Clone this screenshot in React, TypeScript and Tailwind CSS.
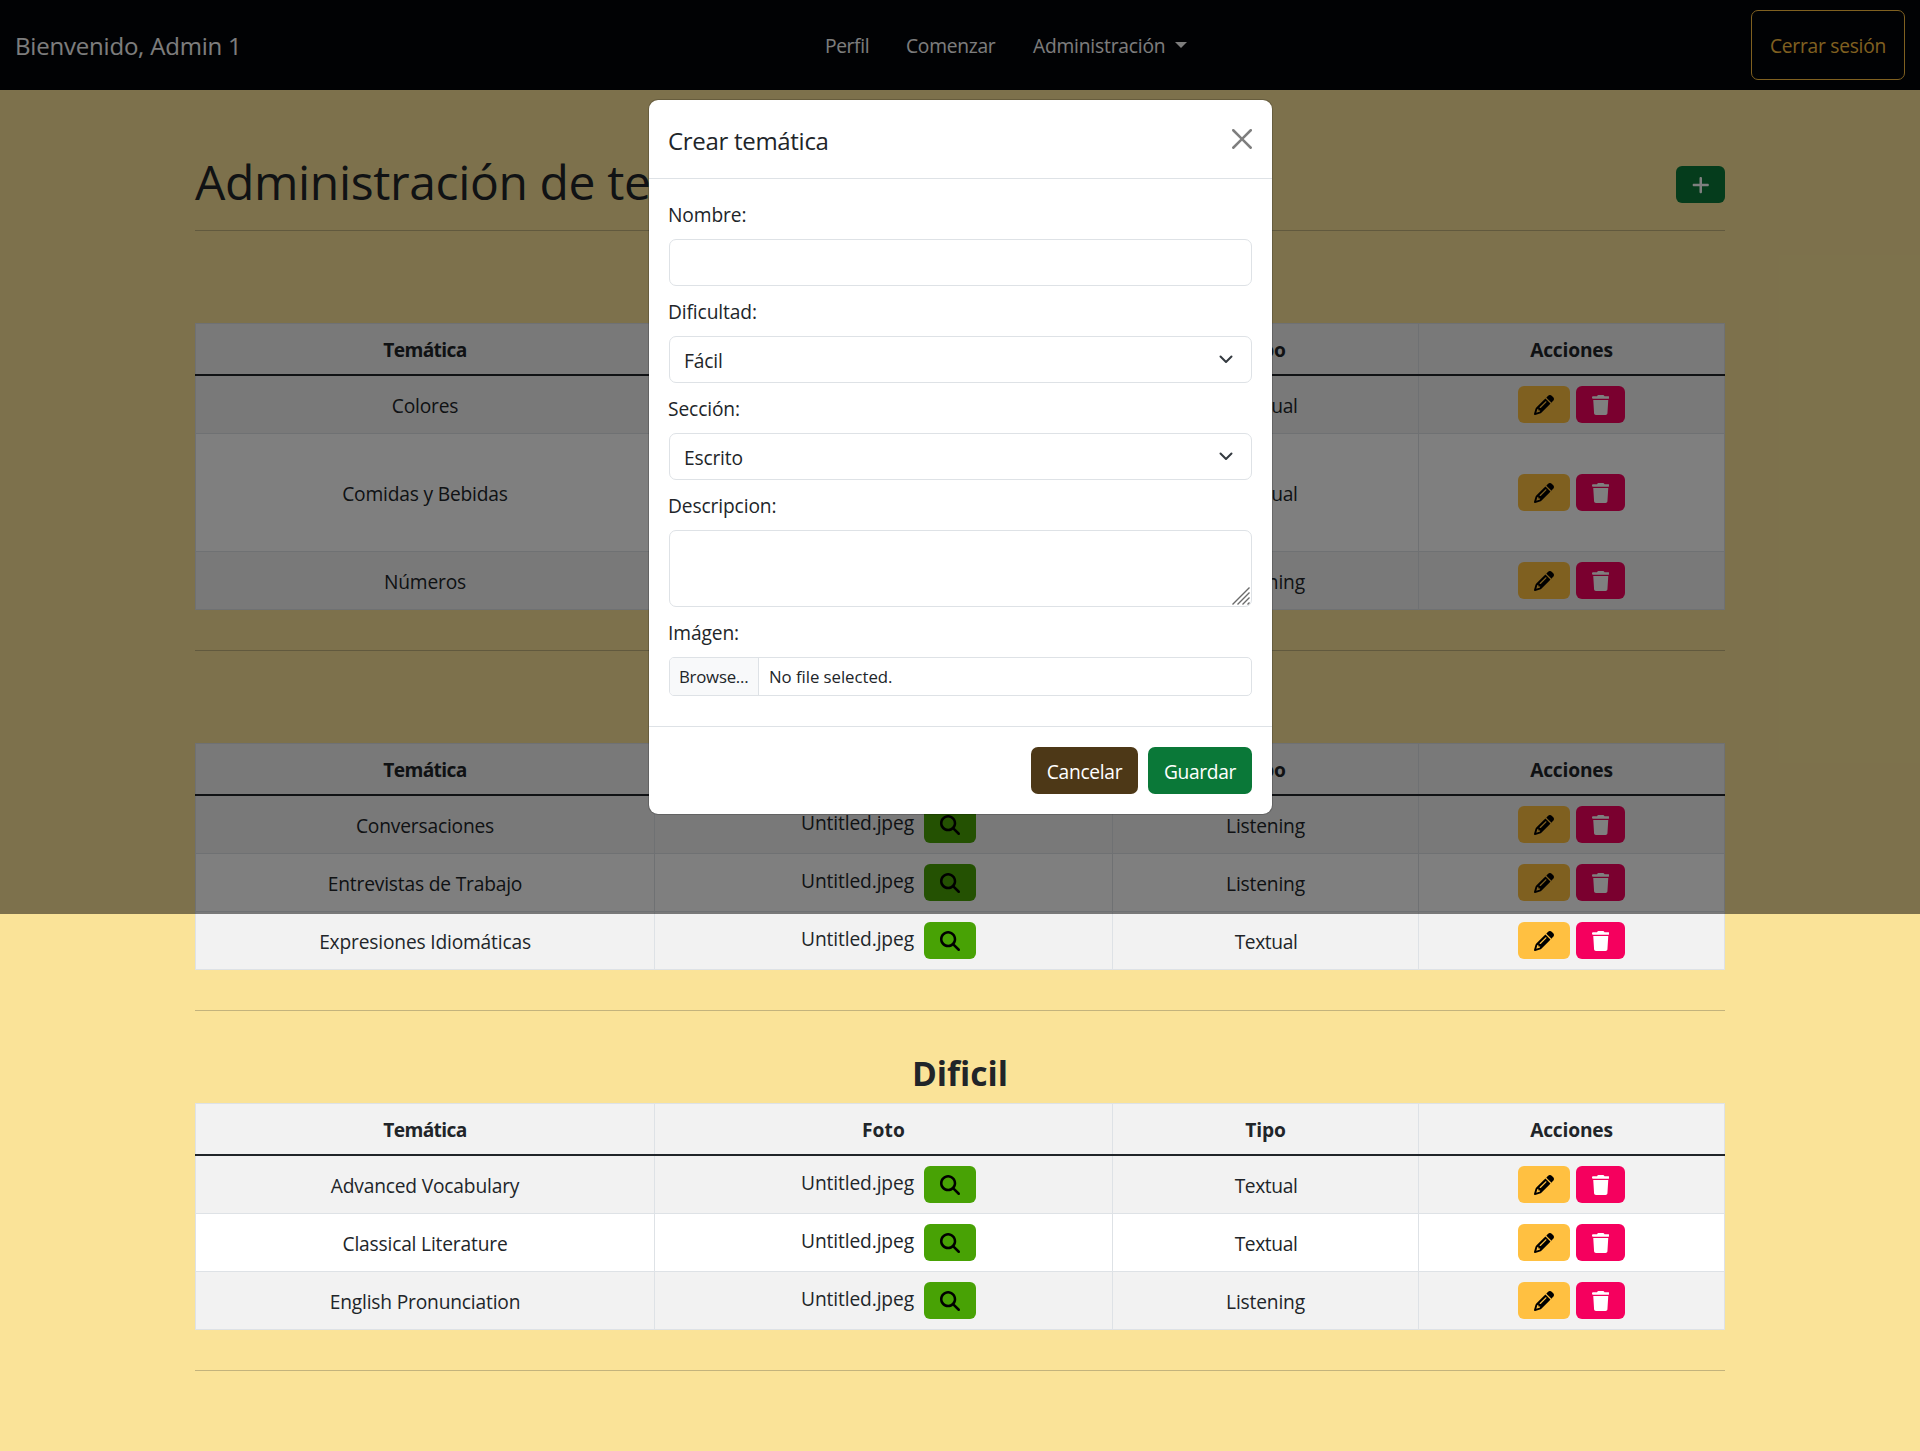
import React from "react";
import { FaMagnifyingGlass, FaPencil, FaPlus, FaTrash } from "react-icons/fa6";

type Row = { name: string; kind: string; tall?: boolean };
type Section = { title: string; rows: Row[] };

const sections: Section[] = [
  {
    title: "Facil",
    rows: [
      { name: "Colores", kind: "Textual" },
      { name: "Comidas y Bebidas", kind: "Textual", tall: true },
      { name: "Números", kind: "Listening" },
    ],
  },
  {
    title: "Medio",
    rows: [
      { name: "Conversaciones", kind: "Listening" },
      { name: "Entrevistas de Trabajo", kind: "Listening" },
      { name: "Expresiones Idiomáticas", kind: "Textual" },
    ],
  },
  {
    title: "Dificil",
    rows: [
      { name: "Advanced Vocabulary", kind: "Textual" },
      { name: "Classical Literature", kind: "Textual" },
      { name: "English Pronunciation", kind: "Listening" },
    ],
  },
];

function Navbar() {
  return (
    <nav className="flex h-[90px] items-center bg-[#020408] pl-[15px] pr-[15px] text-[#fafafa]">
      <span className="w-[810px] pt-px text-[24px] leading-[36px] tracking-[-0.2px]">Bienvenido, Admin 1</span>
      <div className="flex flex-1 items-center pt-px leading-[30px]">
        <a className="w-[81px] tracking-[-0.35px]">Perfil</a>
        <a className="w-[127px] tracking-[-0.25px]">Comenzar</a>
        <a className="flex items-center">
          Administración
          <span className="mb-px ml-[10px] border-x-[6px] border-t-[6px] border-x-transparent border-t-[#fafafa]" />
        </a>
      </div>
      <button className="flex h-[70px] w-[154px] items-center justify-center rounded-[7px] border border-[#ffc041] pt-px tracking-[-0.25px] text-[#ffc041]">
        Cerrar sesión
      </button>
    </nav>
  );
}

function Cell({ children, className = "" }: { children?: React.ReactNode; className?: string }) {
  return (
    <div className={`flex items-center justify-center border-l border-[#dee2e6] last:border-r ${className}`}>
      {children}
    </div>
  );
}

function ThemeTable({ rows }: { rows: Row[] }) {
  return (
    <div className="bg-white">
      <div className="grid h-[53px] grid-cols-[459px_458px_306px_307px] border-b-2 border-t border-b-[#212529] border-t-[#dee2e6] bg-[#f2f2f2] font-bold">
        <Cell className="pt-[2px] tracking-[-0.6px]">Temática</Cell>
        <Cell className="pt-[2px] tracking-[0.1px]">Foto</Cell>
        <Cell className="pt-[2px]">Tipo</Cell>
        <Cell className="pt-[2px]">Acciones</Cell>
      </div>
      {rows.map((row) => (
        <div
          key={row.name}
          className={`grid grid-cols-[459px_458px_306px_307px] border-b border-[#dee2e6] even:bg-[#f2f2f2] ${row.tall ? "h-[118px]" : "h-[58px]"}`}
        >
          <Cell className="pt-[3px]">{row.name}</Cell>
          <Cell className="gap-[10px] pl-[10px]">
            <span className="pb-[4px] tracking-[-0.12px]">Untitled.jpeg</span>
            <button className="flex h-[37px] w-[52px] items-center justify-center rounded-[6px] bg-[#48a205] text-black">
              <FaMagnifyingGlass className="size-5" />
            </button>
          </Cell>
          <Cell className={row.kind === "Textual" ? "pl-px pt-[3px] tracking-[-0.4px]" : "pt-[3px]"}>{row.kind}</Cell>
          <Cell className="gap-[6px]">
            <button className="flex h-[37px] w-[52px] items-center justify-center rounded-[6px] bg-[#ffc041] text-black">
              <FaPencil className="size-5" />
            </button>
            <button className="flex h-[37px] w-[49px] items-center justify-center rounded-[6px] bg-[#f5005e] text-white">
              <FaTrash className="h-5 w-[17.5px]" />
            </button>
          </Cell>
        </div>
      ))}
    </div>
  );
}

function Label({ children }: { children: React.ReactNode }) {
  return <label className="-ml-px mb-[10px] block h-[30px] leading-[32px] tracking-[-0.12px]">{children}</label>;
}

function SelectBox({ value }: { value: string }) {
  return (
    <div className="mb-[10px] flex h-[47px] items-center justify-between rounded-[7px] border border-[#dee2e6] pl-[14px] pr-[17px]">
      <span className="pt-[2px]">{value}</span>
      <svg viewBox="0 0 16 16" className="mb-px size-4" fill="none" stroke="#343a40" strokeWidth="2" strokeLinecap="round" strokeLinejoin="round">
        <path d="m2.5 5.5 5.5 5.5 5.5-5.5" />
      </svg>
    </div>
  );
}

function Modal() {
  return (
    <div className="absolute left-[648px] top-[99px] w-[625px] rounded-[10px] border border-black/[0.175] bg-white bg-clip-padding">
      <div className="flex h-[79px] justify-between border-b border-[#dee2e6] px-5 pt-5">
        <h5 className="-ml-px h-[37px] text-[24px] leading-[41px] tracking-[-0.3px]">Crear temática</h5>
        <svg viewBox="0 0 16 16" className="mt-[9px] size-5 opacity-50" fill="#000">
          <path d="M.293.293a1 1 0 0 1 1.414 0L8 6.586 14.293.293a1 1 0 1 1 1.414 1.414L9.414 8l6.293 6.293a1 1 0 0 1-1.414 1.414L8 9.414l-6.293 6.293a1 1 0 0 1-1.414-1.414L6.586 8 .293 1.707a1 1 0 0 1 0-1.414z" />
        </svg>
      </div>
      <div className="px-5 pb-[30px] pt-5">
        <Label>Nombre:</Label>
        <div className="mb-[10px] h-[47px] rounded-[7px] border border-[#dee2e6]" />
        <Label>Dificultad:</Label>
        <SelectBox value="Fácil" />
        <Label>Sección:</Label>
        <SelectBox value="Escrito" />
        <Label>Descripcion:</Label>
        <div className="mb-[10px] flex h-[77px] items-end justify-end rounded-[7px] border border-[#dee2e6] pb-px pr-px">
          <svg viewBox="0 0 18 18" className="size-[18px]" stroke="#6b6b6b" strokeWidth="1.4">
            <path d="M.5 17.5 17.5.5M5.500 17.500l12-12M10.500 17.500l7-7M15.500 17.500l2-2" />
          </svg>
        </div>
        <Label>Imágen:</Label>
        <div className="flex h-[39px] overflow-hidden rounded-[5px] border border-[#dee2e6] text-[16.8px]">
          <span className="flex w-[89px] items-center border-r border-[#dee2e6] bg-[#f8f9fa] pl-[9px] pt-px tracking-[-0.23px]">Browse...</span>
          <span className="flex items-center pl-[10px] pt-px tracking-[-0.05px]">No file selected.</span>
        </div>
      </div>
      <div className="flex justify-end gap-[10px] border-t border-[#dee2e6] p-5 text-white">
        <button className="h-[47px] w-[107px] rounded-[7px] bg-[#4d3817] pt-[2px] tracking-[-0.28px]">Cancelar</button>
        <button className="h-[47px] w-[104px] rounded-[7px] bg-[#0a7838] pt-[2px] tracking-[-0.35px]">Guardar</button>
      </div>
    </div>
  );
}

export default function App() {
  return (
    <div className="relative h-[1451px] w-[1920px] overflow-hidden bg-[#fae398] font-['Open_Sans','Noto_Sans',sans-serif] text-[19.2px] leading-[30px] tracking-[-0.18px] text-[#212529]">
      <Navbar />
      <main className="mx-auto w-[1530px]">
        <header className="flex h-[140px] items-start justify-between">
          <h1 className="mt-[62px] text-[48px] leading-[60px] tracking-[-0.36px]">Administración de temáticas</h1>
          <button className="mt-[76px] flex h-[37px] w-[49px] items-center justify-center rounded-[6px] bg-[#0a7838] text-white">
            <FaPlus className="h-5 w-[17.5px]" />
          </button>
        </header>
        {sections.map((section) => (
          <section key={section.title} className="pb-10">
            <div className="h-px bg-[#212529]/25" />
            <h3 className="mb-[9px] mt-[41px] text-center text-[33.6px] font-bold leading-[42px] tracking-[0px]">{section.title}</h3>
            <ThemeTable rows={section.rows} />
          </section>
        ))}
        <div className="h-px bg-[#212529]/25" />
      </main>
      <div className="absolute left-0 top-0 h-[914px] w-[1920px] bg-black/50" />
      <Modal />
    </div>
  );
}
